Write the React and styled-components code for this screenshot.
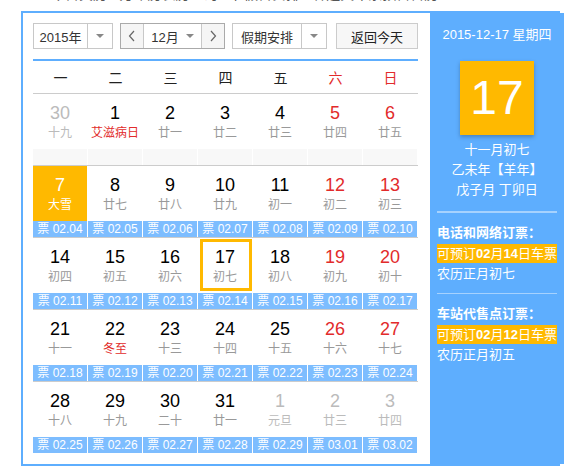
import React from 'react';
import styled, { createGlobalStyle } from 'styled-components';

const GlobalStyle = createGlobalStyle`
  html, body {
    margin: 0;
    padding: 0;
    background: #fff;
  }
  body {
    font-family: "Liberation Sans", "Noto Sans CJK SC", sans-serif;
    color: #000;
    overflow: hidden;
  }
`;

const BLUE = '#5eaefe';
const TICKET = '#7dbdff';
const ORANGE = '#ffb900';
const RED = '#e22b2b';

const Page = styled.div`
  width: 571px;
  height: 472px;
  overflow: hidden;
`;

const TopNote = styled.div`
  margin: -15px 0 0 51px;
  height: 18px;
  font-size: 14px;
  line-height: 18px;
  color: #555;
  white-space: nowrap;
`;

const Frame = styled.div`
  margin: 8px 0 0 21px;
  width: 539px;
  box-sizing: border-box;
  border: 2px solid ${BLUE};
  display: flex;
`;

const CalendarPane = styled.div`
  width: 407px;
  box-sizing: border-box;
  padding: 10px 12px 11px 10px;
  background: #fff;
`;

const Toolbar = styled.div`
  display: flex;
  height: 26px;
  margin-bottom: 10px;
`;

const SelectBox = styled.div`
  display: flex;
  width: ${p => p.$w}px;
  margin-right: ${p => p.$gap}px;
  box-sizing: border-box;
  border: 1px solid #c8c8c8;
  background: #fff;
  font-size: 13px;
  color: #333;
`;

const SelectLabel = styled.div`
  flex: 1;
  display: flex;
  align-items: center;
  justify-content: center;
`;

const ArrowPart = styled.div`
  width: 24px;
  border-left: 1px solid #c8c8c8;
  display: flex;
  align-items: center;
  justify-content: center;
`;

const Caret = styled.span`
  display: inline-block;
  width: 0;
  height: 0;
  border-left: 4px solid transparent;
  border-right: 4px solid transparent;
  border-top: 4px solid #888;
  margin-left: ${p => p.$ml || 0}px;
`;

const MonthGroup = styled.div`
  display: flex;
  width: 105px;
  margin-right: 7px;
  box-sizing: border-box;
  border: 1px solid #aaa;
  font-size: 13px;
  color: #333;
`;

const StepButton = styled.div`
  width: 22px;
  background: #f5f5f5;
  display: flex;
  align-items: center;
  justify-content: center;
  border-${p => p.$side}: 1px solid #c8c8c8;
`;

const MonthLabel = styled.div`
  flex: 1;
  display: flex;
  align-items: center;
  justify-content: center;
  background: #fff;
`;

const TodayButton = styled.div`
  width: 82px;
  box-sizing: border-box;
  border: 1px solid #ccc;
  background: #f7f7f7;
  font-size: 13px;
  color: #222;
  display: flex;
  align-items: center;
  justify-content: center;
`;

const WeekHeader = styled.div`
  display: grid;
  grid-template-columns: repeat(7, 55px);
  height: 32px;
  border-top: 2px solid ${BLUE};
  border-bottom: 1px solid #ccc;
`;

const WeekName = styled.div`
  display: flex;
  align-items: center;
  justify-content: center;
  font-size: 14px;
  color: ${p => (p.$red ? RED : '#222')};
`;

const Week = styled.div`
  border-bottom: ${p => (p.$last ? 'none' : '1px solid #ccc')};
`;

const DayRow = styled.div`
  display: grid;
  grid-template-columns: repeat(7, 55px);
  height: 55px;
`;

const DayCell = styled.div`
  position: relative;
  box-sizing: border-box;
  border-right: 1px solid #fff;
  padding-top: 9px;
  text-align: center;
  background: ${p => (p.$marked ? ORANGE : '#fff')};

  ${p =>
    p.$today &&
    `
    &::after {
      content: '';
      position: absolute;
      left: 2px;
      right: 0;
      top: 1px;
      bottom: 2px;
      border: 3px solid ${ORANGE};
    }
  `}
`;

const DayNum = styled.div`
  font-size: 18px;
  line-height: 20px;
  color: ${p => p.$color};
`;

const Lunar = styled.div`
  font-size: 12px;
  line-height: 20px;
  color: ${p => p.$color};
`;

const TicketRow = styled.div`
  display: grid;
  grid-template-columns: repeat(7, 55px);
  height: 16px;
`;

const Ticket = styled.div`
  box-sizing: border-box;
  border-right: 1px solid #fff;
  background: ${p => (p.$empty ? '#f8f8f8' : TICKET)};
  color: #fff;
  font-size: 12px;
  line-height: 16px;
  text-align: center;
  white-space: nowrap;
`;

const SidePanel = styled.div`
  flex: 1;
  background: ${BLUE};
  color: #fff;
  padding: 0 7px;
  box-sizing: border-box;
  text-align: center;
`;

const SideDate = styled.div`
  font-size: 13px;
  line-height: 20px;
  margin-top: 12px;
`;

const BigDay = styled.div`
  width: 74px;
  height: 74px;
  margin: 16px auto 5px;
  background: ${ORANGE};
  box-shadow: 0 2px 4px rgba(0, 0, 0, 0.25);
  font-size: 48px;
  line-height: 74px;
  color: #fff;
`;

const SideLine = styled.div`
  font-size: 13px;
  line-height: 20px;
`;

const Divider = styled.div`
  height: ${p => p.$h}px;
  background: rgba(255, 255, 255, 0.45);
  margin: ${p => p.$mt}px 0 10px;
`;

const SaleTitle = styled.div`
  text-align: left;
  font-size: 13px;
  line-height: 20px;
  font-weight: bold;
`;

const SaleBadge = styled.div`
  text-align: left;
  background: ${ORANGE};
  font-size: 13px;
  line-height: 19px;
  white-space: nowrap;
  margin-top: 1px;

  b {
    font-weight: bold;
  }
`;

const SaleNote = styled.div`
  text-align: left;
  font-size: 13px;
  line-height: 20px;
  margin-top: 1px;
`;

const Chevron = ({ dir }) => (
  <svg width="8" height="12" viewBox="0 0 8 12">
    <path
      d={dir === 'left' ? 'M6 1 L1.5 6 L6 11' : 'M2 1 L6.5 6 L2 11'}
      fill="none"
      stroke="#666"
      strokeWidth="1.2"
    />
  </svg>
);

const WEEK_NAMES = ['一', '二', '三', '四', '五', '六', '日'];

// [day, lunar, flags] flags: o = other month, h = red lunar, m = marked, t = today
const WEEKS = [
  { days: [[30, '十九', 'o'], [1, '艾滋病日', 'h'], [2, '廿一'], [3, '廿二'], [4, '廿三'], [5, '廿四'], [6, '廿五']], tickets: null },
  { days: [[7, '大雪', 'm'], [8, '廿七'], [9, '廿八'], [10, '廿九'], [11, '初一'], [12, '初二'], [13, '初三']], tickets: ['02.04', '02.05', '02.06', '02.07', '02.08', '02.09', '02.10'] },
  { days: [[14, '初四'], [15, '初五'], [16, '初六'], [17, '初七', 't'], [18, '初八'], [19, '初九'], [20, '初十']], tickets: ['02.11', '02.12', '02.13', '02.14', '02.15', '02.16', '02.17'] },
  { days: [[21, '十一'], [22, '冬至', 'h'], [23, '十三'], [24, '十四'], [25, '十五'], [26, '十六'], [27, '十七']], tickets: ['02.18', '02.19', '02.20', '02.21', '02.22', '02.23', '02.24'] },
  { days: [[28, '十八'], [29, '十九'], [30, '二十'], [31, '廿一'], [1, '元旦', 'o'], [2, '廿三', 'o'], [3, '廿四', 'o']], tickets: ['02.25', '02.26', '02.27', '02.28', '02.29', '03.01', '03.02'] },
];

const dayColors = (flags = '', col) => {
  if (flags.includes('o')) return { num: '#bbb', lunar: '#bbb' };
  if (flags.includes('m')) return { num: '#fff', lunar: '#fff' };
  return {
    num: col >= 5 ? RED : '#000',
    lunar: flags.includes('h') ? RED : '#999',
  };
};

const App = () => (
  <Page>
    <GlobalStyle />
    <TopNote>今日黄历 · 万年历农历查询 · 节假日安排 · 春运火车票预售日历</TopNote>
    <Frame>
      <CalendarPane>
        <Toolbar>
          <SelectBox $w={80} $gap={7}>
            <SelectLabel>2015年</SelectLabel>
            <ArrowPart>
              <Caret />
            </ArrowPart>
          </SelectBox>
          <MonthGroup>
            <StepButton $side="right">
              <Chevron dir="left" />
            </StepButton>
            <MonthLabel>
              12月<Caret $ml={7} />
            </MonthLabel>
            <StepButton $side="left">
              <Chevron dir="right" />
            </StepButton>
          </MonthGroup>
          <SelectBox $w={95} $gap={9}>
            <SelectLabel>假期安排</SelectLabel>
            <ArrowPart>
              <Caret />
            </ArrowPart>
          </SelectBox>
          <TodayButton>返回今天</TodayButton>
        </Toolbar>

        <WeekHeader>
          {WEEK_NAMES.map((n, i) => (
            <WeekName key={n} $red={i >= 5}>
              {n}
            </WeekName>
          ))}
        </WeekHeader>

        {WEEKS.map((week, wi) => (
          <Week key={wi} $last={wi === WEEKS.length - 1}>
            <DayRow>
              {week.days.map(([d, lunar, flags], ci) => {
                const c = dayColors(flags, ci);
                return (
                  <DayCell
                    key={ci}
                    $marked={flags === 'm'}
                    $today={flags === 't'}
                  >
                    <DayNum $color={c.num}>{d}</DayNum>
                    <Lunar $color={c.lunar}>{lunar}</Lunar>
                  </DayCell>
                );
              })}
            </DayRow>
            <TicketRow>
              {week.tickets
                ? week.tickets.map(t => <Ticket key={t}>票 {t}</Ticket>)
                : week.days.map((_, i) => <Ticket key={i} $empty />)}
            </TicketRow>
          </Week>
        ))}
      </CalendarPane>

      <SidePanel>
        <SideDate>2015-12-17 星期四</SideDate>
        <BigDay>17</BigDay>
        <SideLine>十一月初七</SideLine>
        <SideLine>乙未年【羊年】</SideLine>
        <SideLine>戊子月 丁卯日</SideLine>

        <Divider $h={2} $mt={11} />
        <SaleTitle>电话和网络订票：</SaleTitle>
        <SaleBadge>
          可预订<b>02</b>月<b>14</b>日车票
        </SaleBadge>
        <SaleNote>农历正月初七</SaleNote>

        <Divider $h={1} $mt={9} />
        <SaleTitle>车站代售点订票：</SaleTitle>
        <SaleBadge>
          可预订<b>02</b>月<b>12</b>日车票
        </SaleBadge>
        <SaleNote>农历正月初五</SaleNote>
      </SidePanel>
    </Frame>
  </Page>
);

export default App;
